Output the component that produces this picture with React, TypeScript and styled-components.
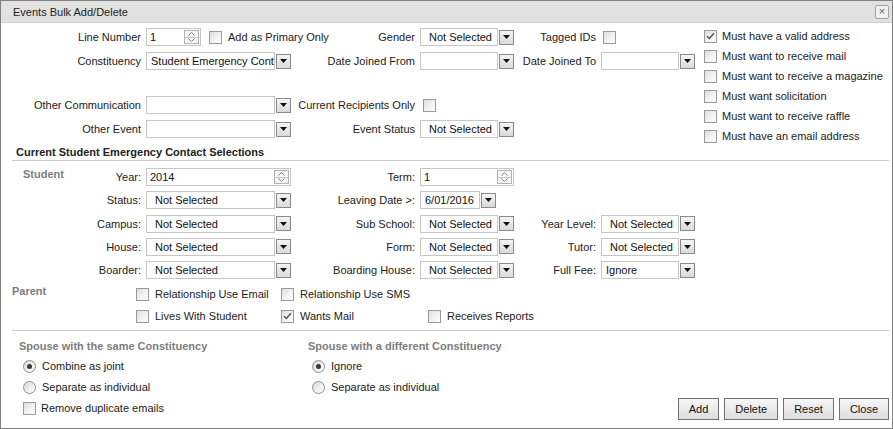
import React from "react";
import styled, { createGlobalStyle } from "styled-components";

const GlobalStyle = createGlobalStyle`
  html, body {
    margin: 0;
    padding: 0;
    background: #ffffff;
  }
  body {
    font-family: "Liberation Sans", Arial, sans-serif;
    font-size: 11px;
    color: #222222;
  }
  * {
    box-sizing: border-box;
  }
`;

/* ---------- small controls ---------- */

const CheckItem = styled.div<{ $gap?: number }>`
  display: flex;
  align-items: center;
  gap: ${(p) => p.$gap ?? 6}px;
  white-space: nowrap;
  height: 20px;
`;

const CheckBox = styled.span`
  width: 13px;
  height: 13px;
  flex: none;
  border: 1px solid #9a9a9a;
  background: linear-gradient(135deg, #dedede 0%, #f4f4f4 60%, #ffffff 100%);
  display: flex;
  align-items: center;
  justify-content: center;
`;

const RadioCircle = styled.span`
  width: 13px;
  height: 13px;
  flex: none;
  border: 1px solid #8f8f8f;
  border-radius: 50%;
  background: linear-gradient(135deg, #d9d9d9 0%, #f2f2f2 60%, #ffffff 100%);
  display: flex;
  align-items: center;
  justify-content: center;
`;

const RadioDot = styled.span`
  width: 5px;
  height: 5px;
  border-radius: 50%;
  background: #3a3a3a;
`;

const Field = styled.div<{ $pad: number }>`
  flex: 1;
  min-width: 0;
  height: 18px;
  border: 1px solid #c6c6c6;
  background: #ffffff;
  padding-left: ${(p) => p.$pad}px;
  line-height: 16px;
  white-space: nowrap;
  overflow: hidden;
  color: #111111;
`;

const SelectWrap = styled.div<{ $width: number }>`
  width: ${(p) => p.$width}px;
  flex: none;
  display: flex;
  align-items: center;
`;

const DropButton = styled.span`
  width: 15px;
  height: 15px;
  flex: none;
  margin-left: 1px;
  border: 1px solid #8a8a8a;
  background: linear-gradient(#f4f4f4, #dadada);
  display: flex;
  align-items: center;
  justify-content: center;
`;

const SpinWrap = styled.div<{ $width: number }>`
  width: ${(p) => p.$width}px;
  flex: none;
  height: 18px;
  border: 1px solid #c6c6c6;
  background: #ffffff;
  display: flex;
  align-items: center;
`;

const SpinText = styled.span`
  flex: 1;
  padding-left: 3px;
  color: #111111;
`;

const SpinButtons = styled.span`
  width: 15px;
  height: 14px;
  margin-right: 1px;
  border: 1px solid #b4b4b4;
  display: flex;
  flex-direction: column;
  background: #f6f6f6;
`;

const SpinHalf = styled.span<{ $top?: boolean }>`
  flex: 1;
  display: flex;
  align-items: center;
  justify-content: center;
  border-bottom: ${(p) => (p.$top ? "1px solid #c8c8c8" : "none")};
`;

const Check = ({
  label,
  checked,
  gap,
}: {
  label?: string;
  checked?: boolean;
  gap?: number;
}) => (
  <CheckItem $gap={gap}>
    <CheckBox>
      {checked && (
        <svg width="9" height="8" viewBox="0 0 9 8">
          <path d="M1 4.2 L3.4 6.5 L8 1.2" fill="none" stroke="#555" strokeWidth="1.5" />
        </svg>
      )}
    </CheckBox>
    {label && <span>{label}</span>}
  </CheckItem>
);

const Radio = ({ label, checked }: { label: string; checked?: boolean }) => (
  <CheckItem $gap={6}>
    <RadioCircle>{checked && <RadioDot />}</RadioCircle>
    <span>{label}</span>
  </CheckItem>
);

const Select = ({ value = "", width }: { value?: string; width: number }) => (
  <SelectWrap $width={width}>
    <Field $pad={value === "Not Selected" ? 8 : 4}>{value}</Field>
    <DropButton>
      <svg width="7" height="4" viewBox="0 0 7 4">
        <path d="M0 0 H7 L3.5 4 Z" fill="#111" />
      </svg>
    </DropButton>
  </SelectWrap>
);

const Spinner = ({ value, width }: { value: string; width: number }) => (
  <SpinWrap $width={width}>
    <SpinText>{value}</SpinText>
    <SpinButtons>
      <SpinHalf $top>
        <svg width="7" height="4" viewBox="0 0 7 4">
          <path d="M0.5 3.5 L3.5 0.5 L6.5 3.5" fill="none" stroke="#808080" />
        </svg>
      </SpinHalf>
      <SpinHalf>
        <svg width="7" height="4" viewBox="0 0 7 4">
          <path d="M0.5 0.5 L3.5 3.5 L6.5 0.5" fill="none" stroke="#808080" />
        </svg>
      </SpinHalf>
    </SpinButtons>
  </SpinWrap>
);

/* ---------- layout ---------- */

const Dialog = styled.div`
  width: 893px;
  height: 429px;
  border: 1px solid #808080;
  display: flex;
  flex-direction: column;
  background: #ffffff;
`;

const TitleBar = styled.div`
  height: 22px;
  flex: none;
  background: #e1e1e1;
  border-bottom: 1px solid #cdcdcd;
  display: flex;
  align-items: center;
  justify-content: space-between;
  padding: 0 3px 0 12px;
  color: #222222;
`;

const CloseBox = styled.span`
  width: 14px;
  height: 14px;
  border: 1px solid #a2a2a2;
  border-radius: 2px;
  background: #f2f2f2;
  color: #666666;
  font-size: 11px;
  line-height: 11px;
  display: flex;
  align-items: center;
  justify-content: center;
`;

const TopSection = styled.div`
  display: flex;
  align-items: flex-start;
  padding-top: 4px;
  height: 116px;
  flex: none;
`;

const TopGrid = styled.div`
  display: grid;
  grid-template-columns: 140px 145px 119px 94px 77px 94px;
  grid-template-rows: 20px 20px 16px 20px 20px;
  column-gap: 5px;
  row-gap: 4px;
  align-items: center;
`;

const Spacer = styled.div`
  grid-column: 1 / -1;
`;

const Label = styled.div`
  text-align: right;
  white-space: nowrap;
  color: #222222;
`;

const Cell = styled.div<{ $gap?: number; $indent?: number }>`
  display: flex;
  align-items: center;
  gap: ${(p) => p.$gap ?? 0}px;
  padding-left: ${(p) => p.$indent ?? 0}px;
  white-space: nowrap;
`;

const CheckList = styled.div`
  margin-left: 9px;
  margin-top: -1px;
  display: flex;
  flex-direction: column;
`;

const SectionHeader = styled.div`
  margin: 5px 3px 0 11px;
  padding-left: 4px;
  line-height: 16px;
  font-weight: bold;
  color: #222222;
  border-bottom: 1px solid #c8c8c8;
`;

const StudentGrid = styled.div`
  margin-top: 6px;
  display: grid;
  grid-template-columns: 74px 61px 145px 119px 94px 77px 94px;
  grid-template-rows: repeat(5, 20px);
  column-gap: 5px;
  row-gap: 3.25px;
  align-items: center;
`;

const SideLabel = styled.div<{ $indent: number }>`
  align-self: start;
  padding-left: ${(p) => p.$indent}px;
  padding-top: 1px;
  font-weight: bold;
  color: #7d7d7d;
  white-space: nowrap;
`;

const ParentGrid = styled.div`
  margin-top: 4px;
  display: grid;
  grid-template-columns: 135px 145px 147px auto;
  grid-template-rows: 20px 20px;
  row-gap: 2px;
  align-items: center;
`;

const Divider = styled.div`
  margin: 4px 3px 0 11px;
  border-top: 1px solid #c8c8c8;
`;

const BottomSection = styled.div`
  flex: 1;
  display: flex;
  justify-content: space-between;
  align-items: flex-end;
  padding: 7px 3px 8px 18px;
`;

const SpouseGrid = styled.div`
  align-self: flex-start;
  display: grid;
  grid-template-columns: 289px auto;
`;

const SpouseColumn = styled.div`
  display: flex;
  flex-direction: column;
  gap: 1px;
`;

const SpouseHeader = styled.div`
  line-height: 16px;
  margin-bottom: 1px;
  font-weight: bold;
  color: #7d7d7d;
`;

const OptionRow = styled.div`
  padding-left: 4px;
`;

const ButtonBar = styled.div`
  display: flex;
  gap: 5px;
`;

const ActionButton = styled.button`
  height: 22px;
  padding: 0 10px;
  border: 1px solid #707070;
  border-radius: 0;
  background: linear-gradient(#f7f7f7, #dddddd);
  font-family: "Liberation Sans", Arial, sans-serif;
  font-size: 11px;
  color: #111111;
`;

const mustHaves = [
  { label: "Must have a valid address", checked: true },
  { label: "Must want to receive mail" },
  { label: "Must want to receive a magazine" },
  { label: "Must want solicitation" },
  { label: "Must want to receive raffle" },
  { label: "Must have an email address" },
];

export default function App() {
  return (
    <>
      <GlobalStyle />
      <Dialog>
        <TitleBar>
          <span>Events Bulk Add/Delete</span>
          <CloseBox>×</CloseBox>
        </TitleBar>

        <TopSection>
          <TopGrid>
            <Label>Line Number</Label>
            <Cell $gap={8}>
              <Spinner value="1" width={55} />
              <Check label="Add as Primary Only" />
            </Cell>
            <Label>Gender</Label>
            <Select value="Not Selected" width={94} />
            <Label>Tagged IDs</Label>
            <Cell $indent={2}>
              <Check />
            </Cell>

            <Label>Constituency</Label>
            <Select value="Student Emergency Contact" width={145} />
            <Label>Date Joined From</Label>
            <Select width={94} />
            <Label>Date Joined To</Label>
            <Select width={94} />

            <Spacer />

            <Label>Other Communication</Label>
            <Select width={145} />
            <Label>Current Recipients Only</Label>
            <Cell $indent={3}>
              <Check />
            </Cell>
            <div />
            <div />

            <Label>Other Event</Label>
            <Select width={145} />
            <Label>Event Status</Label>
            <Select value="Not Selected" width={94} />
            <div />
            <div />
          </TopGrid>

          <CheckList>
            {mustHaves.map((m) => (
              <Check key={m.label} label={m.label} checked={m.checked} gap={5} />
            ))}
          </CheckList>
        </TopSection>

        <SectionHeader>Current Student Emergency Contact Selections</SectionHeader>

        <StudentGrid>
          <SideLabel $indent={22}>Student</SideLabel>
          <Label>Year:</Label>
          <Spinner value="2014" width={145} />
          <Label>Term:</Label>
          <Spinner value="1" width={94} />
          <div />
          <div />

          <div />
          <Label>Status:</Label>
          <Select value="Not Selected" width={145} />
          <Label>Leaving Date &gt;:</Label>
          <Select value="6/01/2016" width={76} />
          <div />
          <div />

          <div />
          <Label>Campus:</Label>
          <Select value="Not Selected" width={145} />
          <Label>Sub School:</Label>
          <Select value="Not Selected" width={94} />
          <Label>Year Level:</Label>
          <Select value="Not Selected" width={94} />

          <div />
          <Label>House:</Label>
          <Select value="Not Selected" width={145} />
          <Label>Form:</Label>
          <Select value="Not Selected" width={94} />
          <Label>Tutor:</Label>
          <Select value="Not Selected" width={94} />

          <div />
          <Label>Boarder:</Label>
          <Select value="Not Selected" width={145} />
          <Label>Boarding House:</Label>
          <Select value="Not Selected" width={94} />
          <Label>Full Fee:</Label>
          <Select value="Ignore" width={94} />
        </StudentGrid>

        <ParentGrid>
          <SideLabel $indent={11}>Parent</SideLabel>
          <Check label="Relationship Use Email" />
          <Check label="Relationship Use SMS" />
          <div />

          <div />
          <Check label="Lives With Student" />
          <Check label="Wants Mail" checked />
          <Check label="Receives Reports" />
        </ParentGrid>

        <Divider />

        <BottomSection>
          <SpouseGrid>
            <SpouseColumn>
              <SpouseHeader>Spouse with the same Constituency</SpouseHeader>
              <OptionRow>
                <Radio label="Combine as joint" checked />
              </OptionRow>
              <OptionRow>
                <Radio label="Separate as individual" />
              </OptionRow>
              <OptionRow>
                <Check label="Remove duplicate emails" gap={5} />
              </OptionRow>
            </SpouseColumn>
            <SpouseColumn>
              <SpouseHeader>Spouse with a different Constituency</SpouseHeader>
              <OptionRow>
                <Radio label="Ignore" checked />
              </OptionRow>
              <OptionRow>
                <Radio label="Separate as individual" />
              </OptionRow>
            </SpouseColumn>
          </SpouseGrid>

          <ButtonBar>
            <ActionButton>Add</ActionButton>
            <ActionButton>Delete</ActionButton>
            <ActionButton>Reset</ActionButton>
            <ActionButton>Close</ActionButton>
          </ButtonBar>
        </BottomSection>
      </Dialog>
    </>
  );
}
